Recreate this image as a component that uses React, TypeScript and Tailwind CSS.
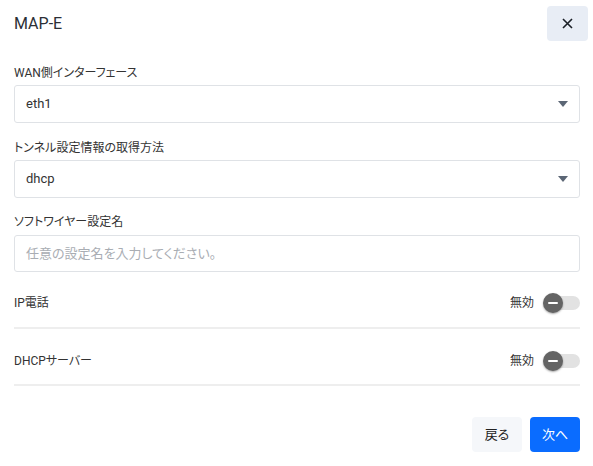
import React from "react";

const font = { fontFamily: 'Roboto, "Noto Sans CJK JP", sans-serif' };

function Caret() {
  return (
    <svg width="10" height="6" viewBox="0 0 10 6" className="shrink-0">
      <path d="M0 0 L10 0 L5 6 Z" fill="#5b6675" />
    </svg>
  );
}

function SelectBox({ value }: { value: string }) {
  return (
    <div className="flex h-[38px] items-center justify-between rounded-[3px] border border-[#dfe2e6] pl-[11px] pr-[11px] text-[13px] text-[#333]">
      <span>{value}</span>
      <Caret />
    </div>
  );
}

function Toggle() {
  return (
    <div className="relative h-[20px] w-[37px]">
      <div className="absolute left-[2px] right-0 top-[3px] h-[14px] rounded-full bg-[#e2e2e2]" />
      <div className="absolute left-0 top-0 flex h-[20px] w-[20px] items-center justify-center rounded-full bg-[#646464] shadow-[0_1px_2px_rgba(0,0,0,0.35)]">
        <div className="h-[2px] w-[10px] rounded bg-white" />
      </div>
    </div>
  );
}

function Row({ label, className }: { label: string; className: string }) {
  return (
    <div className={`border-b-2 border-[#eeeeee] ${className}`}>
      <div className="flex h-[20px] items-center justify-between">
        <span className="text-[12px] text-[#333]">{label}</span>
        <div className="flex items-center gap-[9px]">
          <span className="text-[12px] text-[#333]">無効</span>
          <Toggle />
        </div>
      </div>
    </div>
  );
}

export default function App() {
  return (
    <div style={font} className="h-[466px] w-[593px] bg-white pl-[14px] pr-[13px] [font-feature-settings:'palt']">
      <div className="flex items-center justify-between pt-[6px]">
        <h1 className="text-[16px] font-normal text-[#2b2f36]">MAP-E</h1>
        <button className="-mr-[8px] flex h-[35px] w-[41px] items-center justify-center rounded-[4px] bg-[#e8edf5]">
          <svg width="11" height="11" viewBox="0 0 11 11">
            <path d="M1 1 L10 10 M10 1 L1 10" stroke="#1a1f26" strokeWidth="1.6" />
          </svg>
        </button>
      </div>

      <div className="mt-[24px] h-[16px] text-[12px] leading-[16px] text-[#333]">WAN側インターフェース</div>
      <div className="mt-[4px]">
        <SelectBox value="eth1" />
      </div>

      <div className="mt-[17px] h-[16px] text-[12px] leading-[16px] text-[#333]">トンネル設定情報の取得方法</div>
      <div className="mt-[4px]">
        <SelectBox value="dhcp" />
      </div>

      <div className="mt-[16px] h-[16px] text-[12px] leading-[16px] text-[#333]">ソフトワイヤー設定名</div>
      <div className="mt-[5px] flex h-[37px] items-center rounded-[3px] border border-[#dfe2e6] pl-[11px] text-[13px] text-[#a9adb3]">
        任意の設定名を入力してください。
      </div>

      <Row label="IP電話" className="pt-[21px] pb-[14px]" />
      <Row label="DHCPサーバー" className="pt-[22px] pb-[13px]" />

      <div className="mt-[31px] flex justify-end gap-[8px]">
        <button className="h-[35px] w-[50px] rounded-[4px] bg-[#f5f7fa] text-[13px] text-[#222]">戻る</button>
        <button className="h-[35px] w-[50px] rounded-[4px] bg-[#0a6cff] text-[13px] text-white">次へ</button>
      </div>
    </div>
  );
}
